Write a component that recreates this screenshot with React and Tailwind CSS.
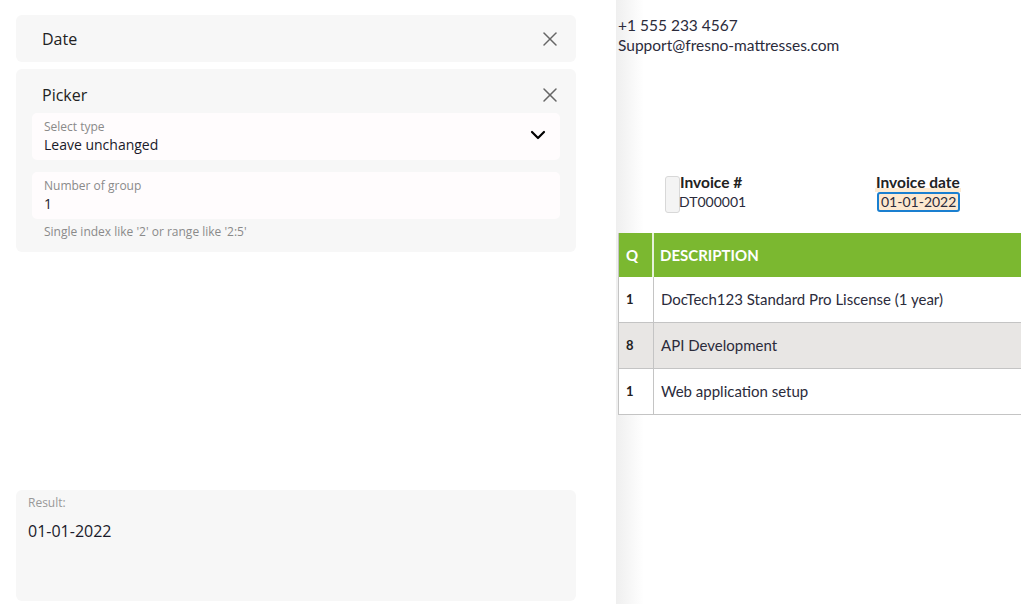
import React from "react";
import { X, ChevronDown } from "lucide-react";

const leftFont = { fontFamily: '"Open Sans", "Noto Sans", sans-serif' };
const rightFont = { fontFamily: 'Lato, "Liberation Sans", sans-serif' };

function Field({ label, value, chevron }) {
  return (
    <div className="h-[47px] rounded-[5px] bg-[#fffcfd] pl-[12px] pr-[10px] pt-[6px] flex items-start justify-between">
      <div>
        <div className="text-[12px] leading-[16px] text-[#8a8a8a]">{label}</div>
        <div className="text-[14px] leading-[20px] text-[#1a1a2a]">{value}</div>
      </div>
      {chevron && (
        <ChevronDown size={24} strokeWidth={2.2} className="mt-[4px] text-black" />
      )}
    </div>
  );
}

function Row({ q, desc, shaded }) {
  return (
    <div className={`flex h-[46px] border-b border-[#c4c4c4] ${shaded ? "bg-[#e8e6e4]" : "bg-white"}`}>
      <div className="w-[35px] shrink-0 border-r border-[#c4c4c4] flex items-center pl-[7px] text-[13px] font-bold text-[#222]">
        {q}
      </div>
      <div className="flex-1 flex items-center pl-[7px] text-[15px] text-[#2b2b3b]">{desc}</div>
    </div>
  );
}

export default function App() {
  return (
    <div className="w-[1021px] h-[604px] overflow-hidden flex bg-white">
      <div className="w-[616px] shrink-0 flex flex-col px-4 pt-[15px] pb-[3px] pr-[40px]" style={leftFont}>
        <div className="h-[47px] rounded-[6px] bg-[#f7f7f7] pl-[26px] pr-[14px] flex items-center justify-between">
          <span className="text-[16px] text-[#222]">Date</span>
          <X size={24} strokeWidth={1.5} className="text-[#666]" />
        </div>
        <div className="mt-[7px] rounded-[6px] bg-[#f7f7f7] px-4 pb-[12px]">
          <div className="flex items-center justify-between pl-[10px] pt-[8px] h-[44px] -mr-[2px]">
            <span className="text-[16px] leading-[24px] text-[#222]">Picker</span>
            <X size={24} strokeWidth={1.5} className="text-[#666]" />
          </div>
          <Field label="Select type" value="Leave unchanged" chevron />
          <div className="mt-[12px]">
            <Field label="Number of group" value="1" />
          </div>
          <div className="mt-[5px] pl-[12px] text-[12px] leading-[16px] text-[#8a8a8a]">
            Single index like '2' or range like '2:5'
          </div>
        </div>
        <div className="mt-auto h-[111px] rounded-[6px] bg-[#f7f7f7] pl-[12px] pt-[5px]">
          <div className="text-[12px] leading-[16px] text-[#999]">Result:</div>
          <div className="mt-[8px] text-[16px] leading-[24px] text-[#1a1a2a]">01-01-2022</div>
        </div>
      </div>

      <div
        className="flex-1 min-w-0 pl-[2px] pt-[15px] bg-[linear-gradient(to_right,#efefef,#ffffff_28px)]"
        style={rightFont}
      >
        <div className="text-[15.5px] leading-[20px] text-[#2b2b3b]">
          <div>+1 555 233 4567</div>
          <div>Support@fresno-mattresses.com</div>
        </div>

        <div className="mt-[118px] flex h-[41px]">
          <div className="ml-[47px] mt-[3px] w-[15px] h-[37px] rounded-[3px] border border-[#d8d8d8] bg-[#f4f4f4]" />
          <div className="-ml-[1px] w-[196px] leading-[19px] text-[#2b2b3b]">
            <div className="font-bold text-[15.5px] text-[#222] pl-[1px]">Invoice #</div>
            <div className="text-[14px]">DT000001</div>
          </div>
          <div className="leading-[19px] text-[#2b2b3b] flex flex-col items-start">
            <div className="font-bold text-[15.5px] text-[#222] px-[1px] shadow-[inset_0_-4px_0_#fdebd3]">Invoice date</div>
            <div className="ml-[2px] h-[20px] px-[2px] rounded-[3px] border-2 border-[#1a7fd0] bg-[#fde8cf] leading-[16px] text-[14px]">
              01-01-2022
            </div>
          </div>
        </div>

        <div className="mt-[19px] w-[420px] border-l border-[#c4c4c4]">
          <div className="flex h-[44px] bg-[#7bb830] text-white font-bold text-[15px]">
            <div className="w-[35px] shrink-0 border-r-2 border-[#e6f1d8] flex items-center pl-[7px]">Q</div>
            <div className="flex-1 flex items-center pl-[6px]">DESCRIPTION</div>
          </div>
          <Row q="1" desc="DocTech123 Standard Pro Liscense (1 year)" />
          <Row q="8" desc="API Development" shaded />
          <Row q="1" desc="Web application setup" />
        </div>
      </div>
    </div>
  );
}
